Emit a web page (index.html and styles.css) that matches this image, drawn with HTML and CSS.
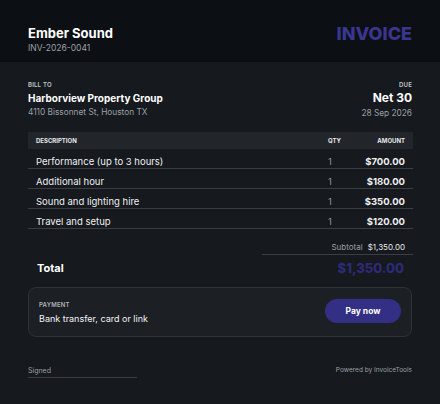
FILE: index.html
```html
<!DOCTYPE html>
<html lang="en">
<head>
    <meta charset="UTF-8">
    <meta name="viewport" content="width=device-width, initial-scale=1.0">
    <title>Invoice</title>
    <link rel="stylesheet" href="styles.css">
</head>
<body>
    <div class="invoice">
        <header class="top">
            <div>
                <div class="brand">Ember Sound</div>
                <div class="number">INV-2026-0041</div>
            </div>
            <div class="title">INVOICE</div>
        </header>

        <section class="content">
            <div class="parties">
                <div>
                    <div class="label">BILL TO</div>
                    <div class="client">Harborview Property Group</div>
                    <div class="muted">4110 Bissonnet St, Houston TX</div>
                </div>
                <div class="right">
                    <div class="label">DUE</div>
                    <div class="terms">Net 30</div>
                    <div class="muted">28 Sep 2026</div>
                </div>
            </div>

            <table class="items">
                <thead>
                    <tr>
                        <th class="desc">DESCRIPTION</th>
                        <th class="qty">QTY</th>
                        <th class="amount">AMOUNT</th>
                    </tr>
                </thead>
                <tbody>
                    <tr>
                        <td class="desc">Performance (up to 3 hours)</td>
                        <td class="qty">1</td>
                        <td class="amount">$700.00</td>
                    </tr>
                    <tr>
                        <td class="desc">Additional hour</td>
                        <td class="qty">1</td>
                        <td class="amount">$180.00</td>
                    </tr>
                    <tr>
                        <td class="desc">Sound and lighting hire</td>
                        <td class="qty">1</td>
                        <td class="amount">$350.00</td>
                    </tr>
                    <tr>
                        <td class="desc">Travel and setup</td>
                        <td class="qty">1</td>
                        <td class="amount">$120.00</td>
                    </tr>
                </tbody>
            </table>

            <div class="subtotal">
                <span class="sub-label">Subtotal</span>
                <span class="sub-value">$1,350.00</span>
            </div>

            <div class="total">
                <span>Total</span>
                <span class="total-value">$1,350.00</span>
            </div>

            <div class="payment">
                <div>
                    <div class="label pay-label">PAYMENT</div>
                    <div class="pay-text">Bank transfer, card or link</div>
                </div>
                <button class="pay-btn">Pay now</button>
            </div>

            <footer class="foot">
                <div class="signed">Signed</div>
                <div class="powered">Powered by InvoiceTools</div>
            </footer>
        </section>
    </div>
</body>
</html>
```

FILE: styles.css
```css
body {
    margin: 0;
    background-color: #16191d;
    font-family: Inter, "Noto Sans", sans-serif;
    color: #e8eaed;
}
.invoice {
    width: 440px;
    height: 404px;
    overflow: hidden;
}
.top {
    background-color: #0c0f13;
    height: 62px;
    box-sizing: border-box;
    padding: 25px 28px 0 28px;
    display: flex;
    justify-content: space-between;
    align-items: flex-start;
}
.brand {
    font-size: 13px;
    font-weight: 700;
    color: #ffffff;
    line-height: 16px;
}
.number {
    font-size: 8.5px;
    color: #9aa0a8;
    margin-top: 2px;
}
.title {
    font-size: 18px;
    font-weight: 800;
    color: #3a3690;
    line-height: 20px;
    margin-top: -1px;
}
.content {
    padding: 19px 28px 0 28px;
}
.parties {
    display: flex;
    justify-content: space-between;
}
.right {
    text-align: right;
}
.label {
    font-size: 6px;
    font-weight: 600;
    color: #c5c9cf;
    letter-spacing: 0.2px;
}
.client {
    font-size: 10px;
    font-weight: 700;
    color: #ffffff;
    margin-top: 4px;
}
.terms {
    font-size: 12px;
    font-weight: 700;
    color: #ffffff;
    margin-top: 2px;
}
.muted {
    font-size: 8.3px;
    color: #9aa0a8;
    margin-top: 3px;
}
.items {
    width: 385px;
    border-collapse: collapse;
    margin-top: 14px;
}
.items th {
    background-color: #22262b;
    font-size: 6px;
    font-weight: 700;
    color: #e6e8eb;
    height: 17px;
    padding: 0;
}
.items td {
    font-size: 9.5px;
    line-height: 12px;
    padding: 7px 0 0 0;
    border-bottom: 1px solid #3a3e44;
    color: #eef0f2;
}
.items .desc {
    text-align: left;
    padding-left: 8px;
}
.items .qty {
    width: 20px;
    text-align: left;
}
.items td.qty {
    color: #8e949c;
}
.items .amount {
    width: 57px;
    text-align: right;
    padding-right: 8px;
}
.items td.amount {
    font-weight: 700;
}
.subtotal {
    margin-left: 234px;
    width: 151px;
    display: flex;
    justify-content: flex-end;
    gap: 5px;
    font-size: 8px;
    line-height: 10px;
    padding: 13px 8px 2px 0;
    box-sizing: border-box;
    border-bottom: 1px solid #3a3e44;
}
.sub-label {
    color: #9aa0a8;
}
.sub-value {
    color: #e8eaed;
}
.total {
    display: flex;
    justify-content: space-between;
    align-items: center;
    padding: 5px 8px 0 9px;
    font-size: 11px;
    font-weight: 700;
    color: #ffffff;
}
.total-value {
    font-size: 13px;
    font-weight: 800;
    color: #2e2a78;
}
.payment {
    margin-top: 11px;
    height: 50px;
    box-sizing: border-box;
    border: 1px solid #2e3238;
    border-radius: 8px;
    background-color: #1c1f24;
    display: flex;
    justify-content: space-between;
    align-items: center;
    padding: 0 10px 0 10px;
}
.pay-label {
    color: #aeb3ba;
}
.pay-text {
    font-size: 9px;
    color: #f2f3f5;
    margin-top: 5px;
}
.pay-btn {
    background-color: #332f85;
    color: #ffffff;
    border: none;
    border-radius: 12px;
    width: 76px;
    height: 24px;
    font-family: Inter, sans-serif;
    font-size: 8.5px;
    font-weight: 700;
    margin-top: -2px;
}
.foot {
    display: flex;
    justify-content: space-between;
    align-items: flex-start;
    margin-top: 29px;
}
.signed {
    width: 109px;
    font-size: 7px;
    color: #9aa0a8;
    padding-bottom: 2px;
    border-bottom: 1px solid #3a3e44;
}
.powered {
    font-size: 6.5px;
    color: #9aa0a8;
}
```
